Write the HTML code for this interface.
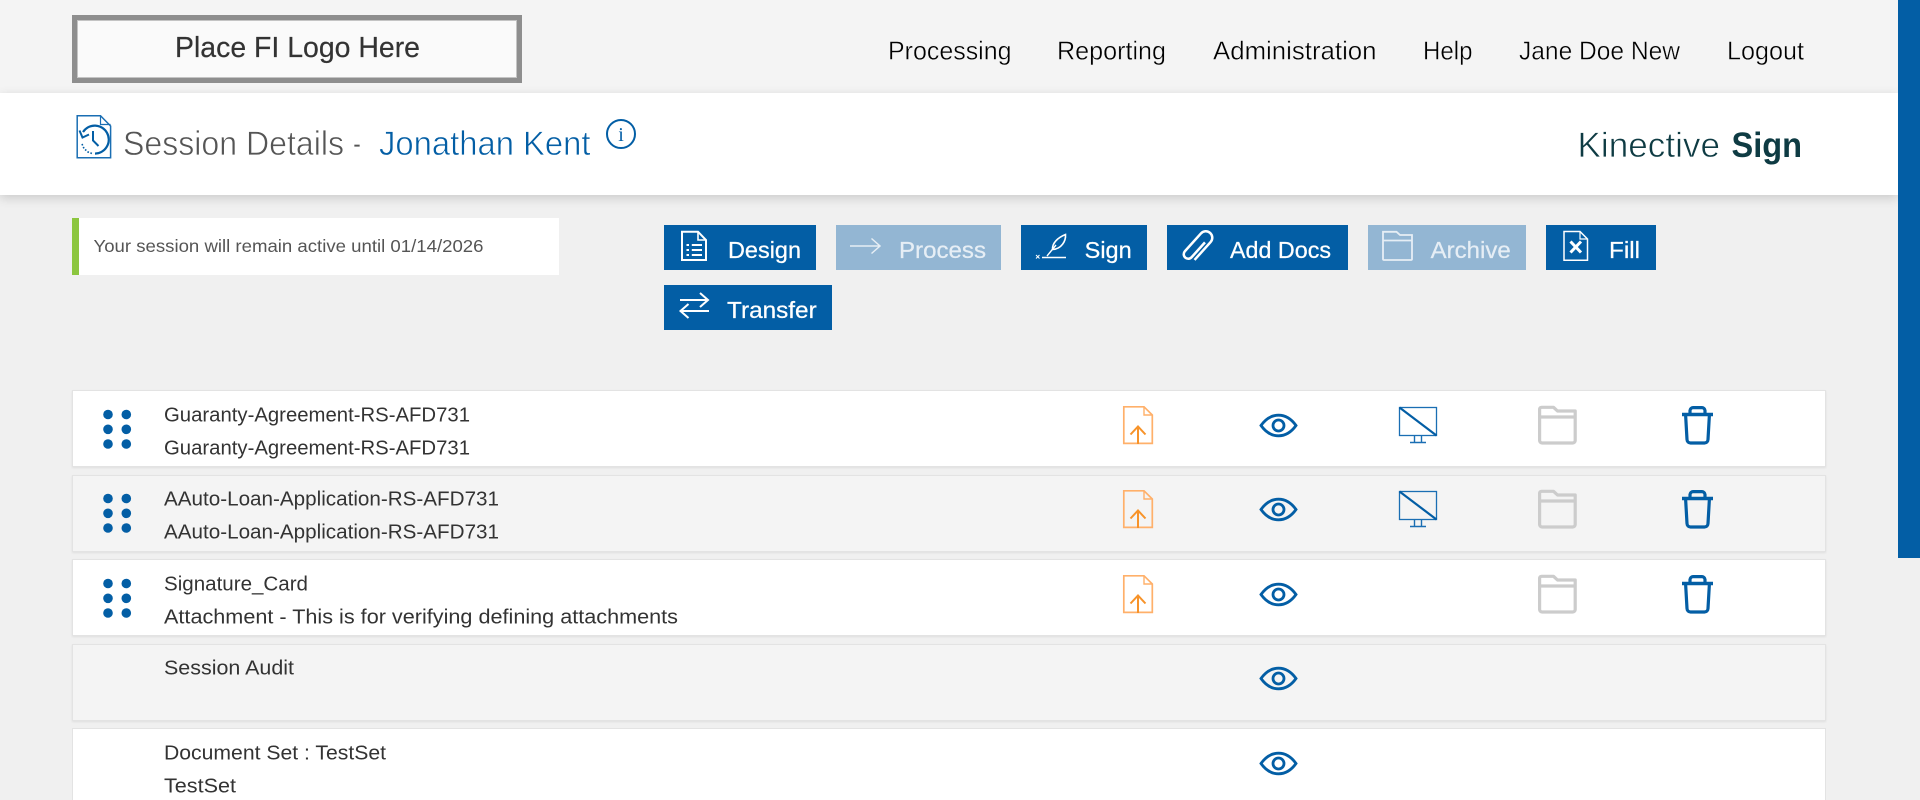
<!DOCTYPE html>
<html lang="en">
<head>
<meta charset="utf-8">
<title>Session Details - Jonathan Kent</title>
<style>
html,body{margin:0;padding:0;width:1920px;height:800px;overflow:hidden;background:#f0f0f0;font-family:"Liberation Sans",Arial,sans-serif}
#page{position:relative;width:1920px;height:800px;overflow:hidden;background:#f0f0f0}
.abs{position:absolute;box-sizing:border-box}
#top{left:0;top:0;width:1898px;height:93px;background:#f4f4f4}
#band{left:0;top:93px;width:1898px;height:102px;background:#fff;box-shadow:0 3px 10px rgba(0,0,0,.16)}
#logo{left:72px;top:15px;width:450px;height:68px;background:#fafafa;border:5px solid #8e8e8e;outline:1px solid #c4c4c4;outline-offset:-6px}
#alert{left:72px;top:218px;width:487px;height:57px;background:#fff;border-left:7px solid #8cc63f}
.btn{background:#035ea5;height:45px;top:225px}
.off{background:#93b6d3}
.row{left:72px;width:1754px;height:77px;border:1px solid #e3e3e3;box-shadow:0 1px 2px rgba(0,0,0,.07);background:#fff}
.alt{background:#f4f4f4}
#thumb{left:1898px;top:0;width:22px;height:558px;background:#035ea5}
svg{position:absolute;left:0;top:0}
</style>
</head>
<body>
<div id="page">
<div class="abs" id="top"></div>
<div class="abs" id="band"></div>
<div class="abs" id="logo"></div>
<div class="abs" id="alert"></div>
<div class="abs btn" style="left:664px;width:152px"></div>
<div class="abs btn off" style="left:836px;width:165px"></div>
<div class="abs btn" style="left:1021px;width:126px"></div>
<div class="abs btn" style="left:1167px;width:181px"></div>
<div class="abs btn off" style="left:1368px;width:158px"></div>
<div class="abs btn" style="left:1546px;width:110px"></div>
<div class="abs btn" style="left:664px;width:168px;top:285px"></div>
<div class="abs row" style="top:390px"></div>
<div class="abs row alt" style="top:475px"></div>
<div class="abs row" style="top:559px"></div>
<div class="abs row alt" style="top:644px"></div>
<div class="abs row" style="top:728px;height:72px;border-bottom:none;box-shadow:none"></div>
<div class="abs" id="thumb"></div>

<svg width="1920" height="800" viewBox="0 0 1920 800" xmlns="http://www.w3.org/2000/svg" font-family="'Liberation Sans',Arial,sans-serif">
<defs>
<g id="upl" fill="none">
<path d="M1123.8 406.8H1144L1152.3 415V443.4H1123.8Z" stroke="#ffb06a" stroke-width="1.7"/>
<path d="M1144 406.8V415H1152.3" stroke="#ffb06a" stroke-width="1.4"/>
<path d="M1138 426V444M1130.5 434.5L1138 426.5L1145.5 434.5" stroke="#f7932a" stroke-width="2"/>
</g>
<g id="eye" fill="none" stroke="#035ea5">
<path d="M1261 425.5C1266 418.5 1272 415.2 1278.5 415.2C1285 415.2 1291 418.5 1296 425.5C1291 432.5 1285 435.8 1278.5 435.8C1272 435.8 1266 432.5 1261 425.5Z" stroke-width="2.8"/>
<circle cx="1278.5" cy="425.5" r="5.5" stroke-width="2.8"/>
</g>
<g id="mon" fill="none" stroke="#1a6eb3">
<rect x="1399.5" y="407.5" width="37" height="28" stroke-width="1.3"/>
<path d="M1399.5 407.5L1436.5 435.5" stroke="#035ea5" stroke-width="2.2"/>
<path d="M1414.5 436V442M1421.5 436V442M1410 442.5H1426" stroke-width="1.4"/>
</g>
<g id="fol" fill="none" stroke="#cccccc" stroke-width="3.2">
<path d="M1539.6 440.5V409A2 2 0 0 1 1541.6 407.3H1553.5L1557.5 411H1575.2V440.5A2.5 2.5 0 0 1 1572.7 443H1542.1A2.5 2.5 0 0 1 1539.6 440.5Z" stroke-linejoin="round"/>
<path d="M1539.6 417H1575.2"/>
</g>
<g id="tra" fill="none" stroke="#035ea5" stroke-width="3.2">
<path d="M1682 414.5H1713" stroke-width="3.6"/>
<path d="M1690 414V410.5A3.2 3.2 0 0 1 1693 407.6H1702A3.2 3.2 0 0 1 1705 410.5V414"/>
<path d="M1685.6 415L1687 439.5A3.6 3.6 0 0 0 1690.5 443H1704.5A3.6 3.6 0 0 0 1708 439.5L1709.4 415"/>
</g>
<g id="dots" fill="#035ea5">
<circle cx="108" cy="414.5" r="4.8"/><circle cx="126.3" cy="414.5" r="4.8"/>
<circle cx="108" cy="429.3" r="4.8"/><circle cx="126.3" cy="429.3" r="4.8"/>
<circle cx="108" cy="444" r="4.8"/><circle cx="126.3" cy="444" r="4.8"/>
</g>
</defs>

<!-- header text -->
<text x="175" y="57" font-size="29" fill="#333" stroke="#333" stroke-width=".2" textLength="245" lengthAdjust="spacingAndGlyphs">Place FI Logo Here</text>
<g font-size="26" fill="#000" stroke="#f4f4f4" stroke-width=".4">
<text x="888" y="59.5" textLength="123.5" lengthAdjust="spacingAndGlyphs">Processing</text>
<text x="1057" y="59.5" textLength="109" lengthAdjust="spacingAndGlyphs">Reporting</text>
<text x="1213" y="59.5" textLength="163.5" lengthAdjust="spacingAndGlyphs">Administration</text>
<text x="1423" y="59.5" textLength="49.5" lengthAdjust="spacingAndGlyphs">Help</text>
<text x="1519" y="59.5" textLength="161" lengthAdjust="spacingAndGlyphs">Jane Doe New</text>
<text x="1727" y="59.5" textLength="77" lengthAdjust="spacingAndGlyphs">Logout</text>
</g>

<!-- session title -->
<g fill="none" stroke="#1a6eb3">
<path d="M77.2 115.7H100.5L110.6 126V157.8H77.2Z" stroke-width="1.5"/>
<path d="M100.5 115.7V124.5H110.6" stroke-width="1.2"/>
<path d="M83 132A14 14 0 1 1 95 153.6" stroke="#035ea5" stroke-width="2.2"/>
<path d="M79.5 130.5L82.5 137.5L89 134.5" stroke="#035ea5" stroke-width="2"/>
<path d="M93 131V140.5L98.5 146" stroke="#035ea5" stroke-width="2"/>
<path d="M82 144L84 148.5L88 152L92 153.5" stroke="#035ea5" stroke-width="1.6" stroke-dasharray="1.6 1.6"/>
</g>
<g stroke="#fff" stroke-width=".65">
<text x="123" y="155" font-size="34" fill="#555" textLength="221" lengthAdjust="spacingAndGlyphs">Session Details</text>
<text x="353" y="155" font-size="34" fill="#555" textLength="8" lengthAdjust="spacingAndGlyphs">-</text>
<text x="379" y="155" font-size="34" fill="#035ea5" textLength="211.5" lengthAdjust="spacingAndGlyphs">Jonathan Kent</text>
<text x="1577.5" y="157" font-size="35" fill="#0e3b43" textLength="142.5" lengthAdjust="spacingAndGlyphs">Kinective</text>
</g>
<circle cx="621" cy="134" r="14" fill="none" stroke="#035ea5" stroke-width="2"/>
<text x="621" y="141" font-size="20" font-family="'Liberation Serif',serif" fill="#035ea5" text-anchor="middle">i</text>
<text x="1731.5" y="157" font-size="35" font-weight="bold" fill="#0e3b43" textLength="70.5" lengthAdjust="spacingAndGlyphs">Sign</text>

<!-- alert -->
<text x="93.5" y="252" font-size="17.5" fill="#555" textLength="390" lengthAdjust="spacingAndGlyphs">Your session will remain active until 01/14/2026</text>

<!-- buttons -->
<g fill="#fff" stroke="#fff" stroke-width=".25" font-size="23">
<text x="728" y="258" textLength="73" lengthAdjust="spacingAndGlyphs">Design</text>
<text x="899" y="258" fill="#e6eef5" stroke="#e6eef5" textLength="87" lengthAdjust="spacingAndGlyphs">Process</text>
<text x="1084.7" y="258" textLength="47" lengthAdjust="spacingAndGlyphs">Sign</text>
<text x="1230" y="258" textLength="101" lengthAdjust="spacingAndGlyphs">Add Docs</text>
<text x="1430.7" y="258" fill="#e6eef5" stroke="#e6eef5" textLength="80" lengthAdjust="spacingAndGlyphs">Archive</text>
<text x="1609" y="258" textLength="31" lengthAdjust="spacingAndGlyphs">Fill</text>
<text x="727" y="318" textLength="89.7" lengthAdjust="spacingAndGlyphs">Transfer</text>
</g>
<g fill="none" stroke="#fff">
<!-- design -->
<path d="M682 231.7H698L706 240V260H682Z" stroke-width="2"/>
<path d="M698 231.7V240H706" stroke-width="1.6"/>
<path d="M686.5 245H689M691.8 245H702M686.5 250H689M691.8 250H702M686.5 255H689M691.8 255H702" stroke-width="2"/>
<!-- process -->
<path d="M850 246H880M871.5 238.5L880 246L871.5 253.5" stroke="#e6eef5" stroke-width="1.5"/>
<!-- transfer -->
<path d="M680 300H708M700 293L708 300L700 307M709 311H681M688.5 304L680.5 311L688.5 318" stroke-width="2"/>
<!-- sign -->
<path d="M1042 257.5H1066" stroke-width="1.4"/>
<path d="M1036 255L1039.5 258.5M1039.5 255L1036 258.5" stroke-width="1"/>
<path d="M1047 256L1056 245" stroke-width="1.4"/>
<path d="M1052.5 249.5C1052 243 1058 237.5 1065.5 234.5C1066 241 1061.5 249 1052.5 249.5Z" stroke-width="1.6"/>
<!-- clip -->
<path transform="translate(1197 246) rotate(42)" d="M3.5 -8V12A4.5 4.5 0 0 1 -5.5 12V-12A6.5 6.5 0 0 1 7.5 -12V12" stroke-width="2.5"/>
<!-- archive -->
<path d="M1383 259V231.8H1396.5L1400 235H1412V259A1 1 0 0 1 1411 260H1384A1 1 0 0 1 1383 259Z" stroke="#e6eef5" stroke-width="1.8"/>
<path d="M1383 240.5H1412" stroke="#e6eef5" stroke-width="1.8"/>
<!-- fill -->
<path d="M1564 231.5H1580L1587.5 239V260.3H1564Z" stroke-width="1.5"/>
<path d="M1580 231.5V239H1587.5" stroke-width="1.2"/>
<path d="M1570.5 241.5L1581 252.5M1581 241.5L1570.5 252.5" stroke-width="3"/>
</g>

<!-- rows -->
<g font-size="20" fill="#333">
<text x="164" y="421.3" textLength="306" lengthAdjust="spacingAndGlyphs">Guaranty-Agreement-RS-AFD731</text>
<text x="164" y="454.3" textLength="306" lengthAdjust="spacingAndGlyphs">Guaranty-Agreement-RS-AFD731</text>
<text x="164" y="505.3" textLength="335" lengthAdjust="spacingAndGlyphs">AAuto-Loan-Application-RS-AFD731</text>
<text x="164" y="538.3" textLength="335" lengthAdjust="spacingAndGlyphs">AAuto-Loan-Application-RS-AFD731</text>
<text x="164" y="590.3" textLength="144" lengthAdjust="spacingAndGlyphs">Signature_Card</text>
<text x="164" y="623.7" textLength="514" lengthAdjust="spacingAndGlyphs">Attachment - This is for verifying defining attachments</text>
<text x="164" y="674.3" textLength="130" lengthAdjust="spacingAndGlyphs">Session Audit</text>
<text x="164" y="759.3" textLength="222" lengthAdjust="spacingAndGlyphs">Document Set : TestSet</text>
<text x="164" y="792.7" textLength="72" lengthAdjust="spacingAndGlyphs">TestSet</text>
</g>

<use href="#dots"/><use href="#upl"/><use href="#eye"/><use href="#mon"/><use href="#fol"/><use href="#tra"/>
<g transform="translate(0 84)"><use href="#dots"/><use href="#upl"/><use href="#eye"/><use href="#mon"/><use href="#fol"/><use href="#tra"/></g>
<g transform="translate(0 169)"><use href="#dots"/><use href="#upl"/><use href="#eye"/><use href="#fol"/><use href="#tra"/></g>
<g transform="translate(0 253)"><use href="#eye"/></g>
<g transform="translate(0 338)"><use href="#eye"/></g>
</svg>
</div>
</body>
</html>
